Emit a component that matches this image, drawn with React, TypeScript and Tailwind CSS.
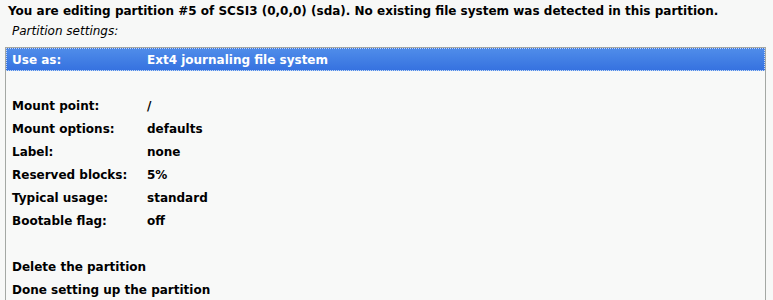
const ROWS: [string, string][] = [
  ["", ""],
  ["Mount point:", "/"],
  ["Mount options:", "defaults"],
  ["Label:", "none"],
  ["Reserved blocks:", "5%"],
  ["Typical usage:", "standard"],
  ["Bootable flag:", "off"],
  ["", ""],
  ["Delete the partition", ""],
  ["Done setting up the partition", ""],
];

export default function App() {
  return (
    <div
      className="h-[300px] w-[773px] overflow-hidden bg-[#f7f8f7] text-black"
      style={{ fontFamily: '"DejaVu Sans", sans-serif' }}
    >
      <p className="pl-[8px] pt-[3px] text-[12px] font-bold leading-[16px]">
        You are editing partition #5 of SCSI3 (0,0,0) (sda). No existing file system was detected in this partition.
      </p>
      <p className="pl-[12px] pt-[5px] text-[12px] italic leading-[15px]">Partition settings:</p>
      <div className="ml-[5px] mr-[7px] mt-[8px] h-[400px] border border-[#a4a8a4] bg-[#f8f9f8]">
        <div className="flex h-[23px] items-center border border-dotted border-[#c8d8f4] bg-gradient-to-b from-[#4f8ce9] to-[#3672e0] pl-[5px] text-[12px] font-bold text-white">
          <span className="w-[135px]">Use as:</span>
          <span>Ext4 journaling file system</span>
        </div>
        {ROWS.map(([k, v], i) => (
          <div key={i} className="flex h-[23px] items-center pl-[6px] text-[12px] font-bold">
            <span className={v ? "w-[135px]" : ""}>{k}</span>
            {v && <span>{v}</span>}
          </div>
        ))}
      </div>
    </div>
  );
}
